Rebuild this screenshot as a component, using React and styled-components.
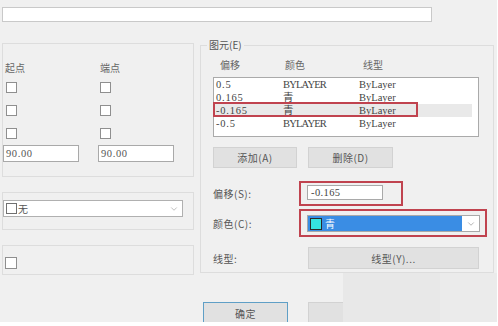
import styled, { createGlobalStyle } from "styled-components";
import { ChevronDown } from "lucide-react";

const GlobalStyle = createGlobalStyle`
  html, body { margin: 0; padding: 0; background: #fff; }
  body { font-family: "Noto Sans CJK SC", "Liberation Sans", sans-serif; }
  * { box-sizing: border-box; }
`;

const Dialog = styled.div`
  position: relative;
  width: 497px;
  height: 322px;
  overflow: hidden;
  background: #f0f0f0;
  padding-top: 7px;
`;

const NameInput = styled.div`
  margin-left: 2px;
  width: 430px;
  height: 15px;
  background: #fff;
  border: 1px solid #c9c9c9;
`;

const Main = styled.div`
  display: flex;
  align-items: flex-start;
  gap: 6px;
  margin-top: 21px;
  padding-left: 2px;
`;

const LeftColumn = styled.div`
  display: flex;
  flex-direction: column;
  gap: 15px;
  width: 192px;
`;

const Box = styled.div`
  border: 1px solid #dddddd;
  padding: ${(p) => p.$pad};
`;

const CapGrid = styled.div`
  display: grid;
  grid-template-columns: 95px 95px;
  grid-template-rows: ${(p) => p.$rows};
`;

const Head = styled.div`
  padding-left: 2px;
  font-size: 10px;
  line-height: 16px;
  color: #666;
`;

const Cell = styled.div`
  display: flex;
  align-items: center;
`;

const Check = styled.span`
  display: block;
  width: ${(p) => p.$size || 11}px;
  height: ${(p) => p.$size || 11}px;
  margin-left: ${(p) => p.$ml ?? 3}px;
  background: #fff;
  border: 1px solid #8f8f8f;
`;

const NumInput = styled.div`
  width: 76px;
  height: 17px;
  background: #fff;
  border: 1px solid #a9a9a9;
  padding-left: 2px;
  font-family: "Liberation Serif", serif;
  font-size: 10.5px;
  line-height: 15px;
  letter-spacing: 0.6px;
  color: #555;
`;

const Combo = styled.div`
  display: flex;
  align-items: center;
  width: 180px;
  height: 17px;
  background: #fff;
  border: 1px solid #b0b0b0;
  padding: 0 3px 0 2px;
  font-size: 10px;
  color: #555;
  > span:nth-child(2) { flex: 1; margin-left: 1px; }
`;

const SmallSquare = styled.span`
  width: 11px;
  height: 11px;
  border: 1px solid #707070;
`;

const ElementBox = styled.fieldset`
  margin: -4px 0 0 0;
  padding: 0 0 3px 12px;
  width: 294px;
  min-width: 0;
  border: 1px solid #dddddd;
  > legend {
    margin-left: -6px;
    padding: 0 2px;
    font-size: 10px;
    line-height: 12px;
    color: #555;
  }
`;

const Cols = styled.div`
  display: grid;
  grid-template-columns: ${(p) => p.$cols};
`;

const HeaderRow = styled(Cols)`
  margin-top: 8px;
  height: 12px;
  padding-left: 7px;
  font-size: 10px;
  line-height: 12px;
  color: #666;
`;

const List = styled.div`
  position: relative;
  margin-top: 6px;
  width: 266px;
  height: 60px;
  background: #fff;
  border: 1px solid #aaaaaa;
`;

const Row = styled(Cols)`
  height: 13px;
  margin-right: 6px;
  padding-left: 2px;
  font-family: "Liberation Serif", "Noto Sans CJK SC", serif;
  font-size: 10.5px;
  line-height: 13px;
  color: #444;
  background: ${(p) => (p.$selected ? "#e9e9e9" : "transparent")};
  > span:first-child { letter-spacing: 0.8px; }
`;

const Upper = styled.span`
  letter-spacing: -0.8px;
`;

const Mark = styled.div`
  position: absolute;
  left: -1px;
  top: 24px;
  width: 205px;
  height: 15px;
  border: 2px solid #c0434f;
`;

const ButtonRow = styled.div`
  display: flex;
  gap: 11px;
  margin-top: 10px;
`;

const Button = styled.div`
  display: flex;
  align-items: center;
  justify-content: center;
  width: ${(p) => p.$w}px;
  height: ${(p) => p.$h || 21}px;
  margin-left: ${(p) => p.$ml || 0}px;
  background: #e1e1e1;
  border: 1px solid ${(p) => (p.$default ? "#5f9fc6" : "#d2d2d2")};
  font-size: 10px;
  letter-spacing: 0.5px;
  color: #555;
`;

const FieldRow = styled.div`
  display: flex;
  align-items: center;
  margin-top: ${(p) => p.$mt}px;
`;

const FieldLabel = styled.span`
  width: 86px;
  font-size: 10px;
  letter-spacing: 0.5px;
  color: #555;
`;

const RedFrame = styled.div`
  border: 2px solid #c0434f;
  padding: ${(p) => p.$pad};
`;

const TextBox = styled.div`
  width: 76px;
  height: 15px;
  background: #fff;
  border: 1px solid #a9a9a9;
  padding-left: 3px;
  font-family: "Liberation Serif", serif;
  font-size: 10.5px;
  line-height: 13px;
  letter-spacing: 0.4px;
  color: #444;
`;

const ColorCombo = styled.div`
  display: flex;
  width: 173px;
  height: 17px;
  background: #fff;
  border: 1px solid #a9a9a9;
`;

const ColorValue = styled.div`
  display: flex;
  align-items: center;
  flex: 1;
  background: #3a8de4;
  padding-left: 2px;
  font-size: 10px;
  color: #fff;
`;

const Swatch = styled.span`
  width: 12px;
  height: 12px;
  margin-right: 3px;
  background: #34e3e0;
  border: 1px solid #2a2a2a;
`;

const Arrow = styled.div`
  display: flex;
  align-items: center;
  justify-content: center;
  width: 17px;
`;

const Footer = styled.div`
  display: flex;
  gap: 20px;
  margin-top: 27px;
  padding-left: 203px;
`;

const Patch = styled.div`
  position: absolute;
  top: 273px;
  left: ${(p) => p.$x}px;
  width: ${(p) => p.$w}px;
  height: 49px;
  background: ${(p) => p.$bg};
`;

const rows = [
  ["0.5", "BYLAYER", "ByLayer"],
  ["0.165", "青", "ByLayer"],
  ["-0.165", "青", "ByLayer"],
  ["-0.5", "BYLAYER", "ByLayer"],
];

export default function App() {
  return (
    <>
      <GlobalStyle />
      <Dialog>
        <NameInput />
        <Main>
          <LeftColumn>
            <Box $pad="16px 0 14px 0">
              <CapGrid $rows="16px 23px 23px 23px 17px">
                <Head>起点</Head>
                <Head>端点</Head>
                <Cell><Check /></Cell>
                <Cell><Check $ml={2} /></Cell>
                <Cell><Check /></Cell>
                <Cell><Check $ml={2} /></Cell>
                <Cell><Check /></Cell>
                <Cell><Check $ml={2} /></Cell>
                <NumInput>90.00</NumInput>
                <NumInput>90.00</NumInput>
              </CapGrid>
            </Box>
            <Box $pad="7px 0 12px 0">
              <Combo>
                <SmallSquare />
                <span>无</span>
                <ChevronDown size={10} color="#999" strokeWidth={1.5} />
              </Combo>
            </Box>
            <Box $pad="11px 0 5px 0">
              <Check $size={12} $ml={2} />
            </Box>
          </LeftColumn>

          <ElementBox>
            <legend>图元(E)</legend>
            <HeaderRow $cols="65px 78px 1fr">
              <span>偏移</span>
              <span>颜色</span>
              <span>线型</span>
            </HeaderRow>
            <List>
              {rows.map((r, i) => (
                <Row key={i} $cols="67px 76px 1fr" $selected={i === 2}>
                  <span>{r[0]}</span>
                  {r[1] === "BYLAYER" ? <Upper>{r[1]}</Upper> : <span>{r[1]}</span>}
                  <span>{r[2]}</span>
                </Row>
              ))}
              <Mark />
            </List>
            <ButtonRow>
              <Button $w={84}>添加(A)</Button>
              <Button $w={85}>删除(D)</Button>
            </ButtonRow>
            <FieldRow $mt={13}>
              <FieldLabel>偏移(S):</FieldLabel>
              <RedFrame $pad="2px 18px 4px 6px">
                <TextBox>-0.165</TextBox>
              </RedFrame>
            </FieldRow>
            <FieldRow $mt={3}>
              <FieldLabel>颜色(C):</FieldLabel>
              <RedFrame $pad="4px 5px 3px 6px">
                <ColorCombo>
                  <ColorValue>
                    <Swatch />
                    青
                  </ColorValue>
                  <Arrow>
                    <ChevronDown size={10} color="#888" strokeWidth={1.5} />
                  </Arrow>
                </ColorCombo>
              </RedFrame>
            </FieldRow>
            <FieldRow $mt={10}>
              <FieldLabel>线型:</FieldLabel>
              <Button $w={171} $h={22} $ml={9}>线型(Y)...</Button>
            </FieldRow>
          </ElementBox>
        </Main>
        <Footer>
          <Button $w={85} $h={23} $default>确定</Button>
          <Button $w={85} $h={23} />
        </Footer>
        <Patch $x={343} $w={97} $bg="#e8e8e8" />
        <Patch $x={440} $w={57} $bg="#ebebeb" />
      </Dialog>
    </>
  );
}
